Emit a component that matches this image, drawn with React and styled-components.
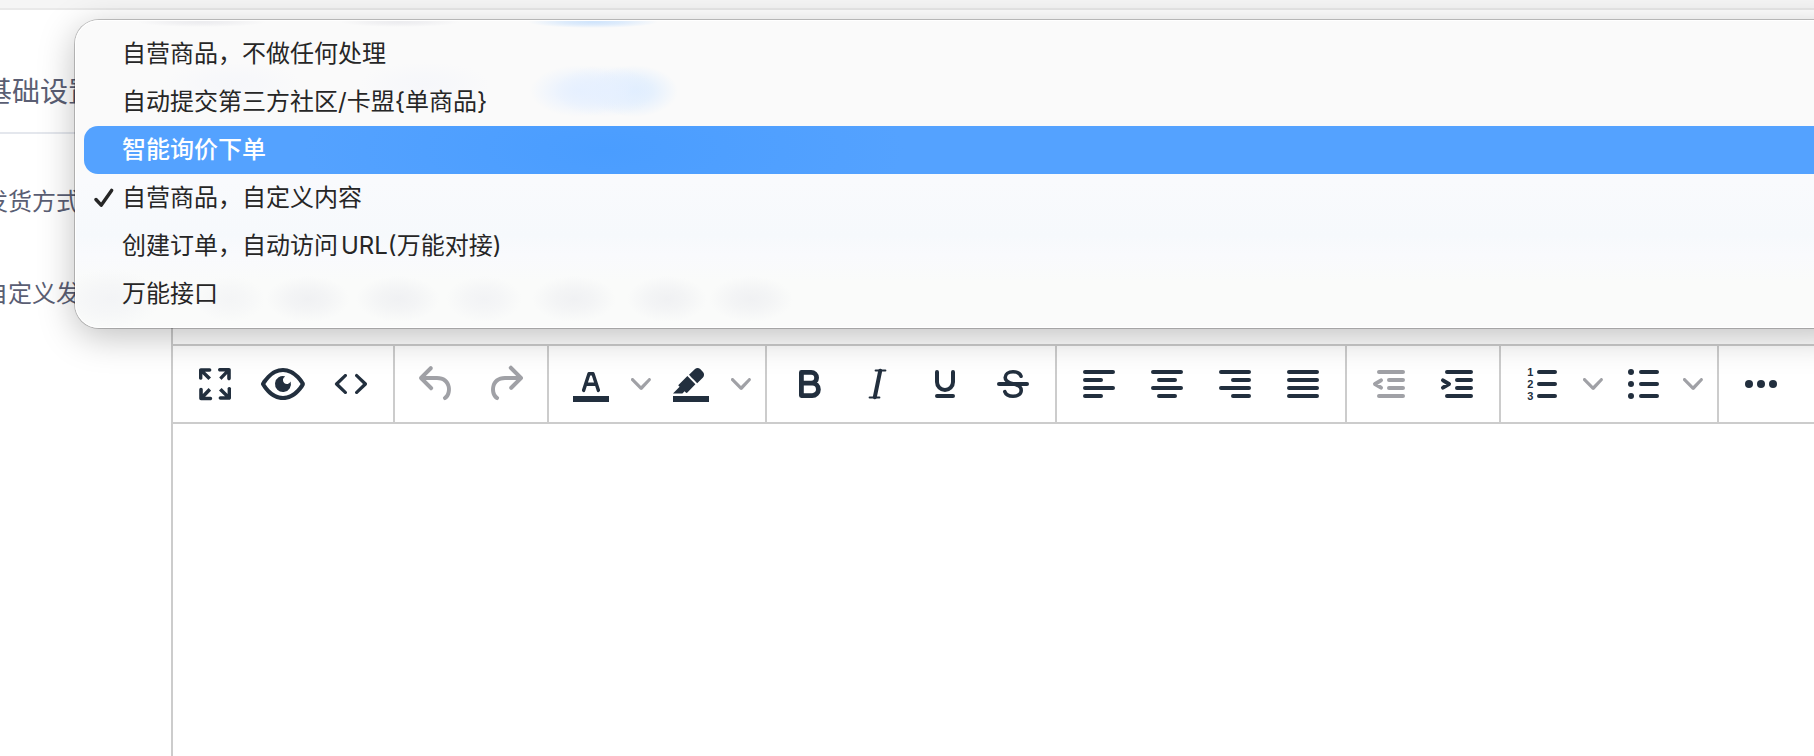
import React, { useState } from 'react';
import styled, { createGlobalStyle, css } from 'styled-components';

const GlobalStyle = createGlobalStyle`
  * {
    box-sizing: border-box;
  }
  body {
    margin: 0;
    background: #fff;
    font-family: Inter, 'Noto Sans CJK SC', sans-serif;
  }
`;

const Page = styled.div`
  position: relative;
  display: flex;
  flex-direction: column;
  min-height: 100vh;
  overflow: hidden;
`;

const TopStrip = styled.div`
  height: 10px;
  background: #f5f5f5;
  border-bottom: 2px solid #e9e9e9;
`;

const TabBar = styled.nav`
  display: flex;
  margin-left: -16px;
  padding: 64px 0 22px;
  border-bottom: 2px solid #e4e7ed;
`;

const Tab = styled.a`
  color: #5a5e73;
  font-size: 28px;
  line-height: 36px;
  text-decoration: none;
`;

const Form = styled.form`
  flex: 1;
  display: flex;
  flex-direction: column;
  gap: 38px;
  margin: 44px -20px 0 -16px;
`;

const FormRow = styled.div`
  display: flex;
  flex: ${(props) => (props.$grow ? 1 : 'none')};
`;

const Label = styled.label`
  flex: none;
  width: 187px;
  color: #5a5e73;
  font-size: 24px;
  line-height: ${(props) => (props.$tall ? 60 : 48)}px;
`;

const Editor = styled.div`
  flex: 1;
  display: flex;
  flex-direction: column;
  border: solid #ccc;
  border-width: 2px 0 0 2px;
`;

const MenuBar = styled.div`
  height: 78px;
`;

const Toolbar = styled.div`
  display: flex;
  height: 80px;
  border: solid #ccc;
  border-width: 2px 0;
`;

const ToolGroup = styled.div`
  display: flex;
  align-items: center;
  padding: 0 8px;
  border-right: 2px solid #ccc;

  &:last-child {
    border-right: 0;
  }
`;

const ToolButton = styled.button`
  display: flex;
  align-items: center;
  justify-content: center;
  width: ${(props) => (props.$narrow ? 32 : 68)}px;
  height: 68px;
  padding: 0;
  border: 0;
  background: none;
  color: ${(props) => (props.$muted ? '#a0a1a6' : '#222f3e')};
`;

const TextArea = styled.textarea`
  flex: 1;
  padding: 24px;
  border: 0;
  outline: 0;
  resize: none;
  background: transparent;
  font: inherit;
  font-size: 24px;
`;

// what shines through the translucent popup: [x, y, width, height, colour]
const glows = [
  [127, 2, 130, 10, '#ececef'],
  [325, 2, 120, 10, '#ececef'],
  [518, 2, 130, 12, '#cfe4fc'],
  [157, 64, 140, 44, '#f6f7fa'],
  [350, 64, 130, 44, '#f6f7fa'],
  [505, 71, 100, 52, '#e6f0ff'],
  [530, 71, 100, 52, '#e6f0ff'],
  [558, 71, 90, 52, '#dcecff'],
  [35, 279, 100, 60, '#f3f4f6'],
  [155, 279, 70, 46, '#f4f5f6'],
  [233, 279, 84, 46, '#f0f1f3'],
  [323, 279, 84, 46, '#f0f1f3'],
  [409, 279, 76, 46, '#f2f3f5'],
  [499, 279, 84, 46, '#f0f1f3'],
  [592, 279, 80, 46, '#f0f1f3'],
  [676, 279, 84, 46, '#f0f1f3'],
];

const glowLayers = glows
  .map(
    ([x, y, w, h, color]) =>
      `radial-gradient(${w / 2}px ${h / 2}px at ${x}px ${y}px, ${color}, ${color}aa 45%, ${color}00)`
  )
  .join(', ');

const Popup = styled.ul`
  position: absolute;
  top: 20px;
  left: 75px;
  right: -40px;
  margin: 0;
  padding: 10px 9px;
  list-style: none;
  border-radius: 24px;
  background: ${glowLayers},
    linear-gradient(#fafafa 0, #fafafa 48%, #f9fafd 52%, #f6f9fc 70%, #f9fafd 76%, #fafbfa 85%);
  box-shadow:
    inset 0 0 0 1px #fff,
    0 0 0 1px rgba(0, 0, 0, 0.22),
    0 8px 36px rgba(0, 0, 0, 0.26);
`;

const Option = styled.button`
  display: flex;
  align-items: center;
  width: 100%;
  height: 48px;
  padding: 0;
  border: 0;
  border-radius: 14px;
  background: none;
  color: #262626;
  font-family: inherit;
  font-size: 24px;
  line-height: 48px;
  text-align: left;
  text-autospace: normal;

  ${(props) =>
    props.$active &&
    css`
      background: radial-gradient(300px 100px at 520px 24px, #4a9dff, #54a2ff);
      color: #fff;
      font-weight: 500;
    `}
`;

const CheckSlot = styled.span`
  display: flex;
  flex: none;
  width: 38px;
  padding-left: 10px;
`;

const Icon = ({ children }) => (
  <svg width="48" height="48" viewBox="0 0 24 24" fill="currentColor" aria-hidden="true">
    {children}
  </svg>
);

const Strokes = ({ d, width = 2 }) => (
  <path
    d={d}
    fill="none"
    stroke="currentColor"
    strokeWidth={width}
    strokeLinecap="round"
    strokeLinejoin="round"
  />
);

const icons = {
  fullscreen: (
    <path d="m15.3 10-1.2-1.3 2.9-3h-2.3a.9.9 0 1 1 0-1.7H19c.5 0 .9.4.9.9v4.4a.9.9 0 1 1-1.8 0V7l-2.9 3Zm0 4 3 3v-2.3a.9.9 0 1 1 1.7 0V19c0 .5-.4.9-.9.9h-4.4a.9.9 0 1 1 0-1.8H17l-3-2.9 1.3-1.2ZM10 15.4l-2.9 3h2.3a.9.9 0 1 1 0 1.7H5a.9.9 0 0 1-.9-.9v-4.4a.9.9 0 1 1 1.8 0V17l2.9-3 1.2 1.3ZM8.7 10 5.7 7v2.3a.9.9 0 0 1-1.7 0V5c0-.5.4-.9.9-.9h4.4a.9.9 0 0 1 0 1.8H7l3 2.9-1.3 1.2Z" />
  ),
  preview: (
    <path
      fillRule="evenodd"
      d="M3.5 12.5c.5.8 1.1 1.6 1.8 2.3 2 2 4.2 3.2 6.7 3.2s4.7-1.2 6.7-3.2a16.2 16.2 0 0 0 2.1-2.8 15.7 15.7 0 0 0-2.1-2.8c-2-2-4.2-3.2-6.7-3.2a9.3 9.3 0 0 0-6.7 3.2A16.2 16.2 0 0 0 3.2 12c0 .2.2.3.3.5Zm-2.4-1 .7-1.2L4 7.8C6.2 5.4 8.9 4 12 4c3 0 5.8 1.4 8.1 3.8a18.2 18.2 0 0 1 2.8 3.7v1l-.7 1.2a18.2 18.2 0 0 1-2.1 2.5c-2.3 2.4-5 3.8-8.1 3.8-3 0-5.8-1.4-8.1-3.8a18.2 18.2 0 0 1-2.8-3.7 1 1 0 0 1 0-1Zm12-3.3a2 2 0 1 0 2.7 2.6 4 4 0 1 1-2.6-2.6Z"
    />
  ),
  code: (
    <path d="M9.8 15.7c.3.3.3.8 0 1-.3.4-.9.4-1.2 0l-4.4-4.1a.8.8 0 0 1 0-1.2l4.4-4.2c.3-.3.9-.3 1.2 0 .3.3.3.8 0 1.1L6 12l3.8 3.7ZM14.2 15.7c-.3.3-.3.8 0 1 .4.4.9.4 1.2 0l4.4-4.1c.3-.3.3-.9 0-1.2l-4.4-4.2a.8.8 0 0 0-1.2 0c-.3.3-.3.8 0 1.1L18 12l-3.8 3.7Z" />
  ),
  undo: (
    <path d="M6.4 8H12c3.7 0 6.2 2 6.8 5.1.6 2.7-.4 5.6-2.3 6.8a1 1 0 0 1-1-1.8c1.1-.6 1.8-2.7 1.4-4.6-.5-2.1-2.1-3.5-4.9-3.5H6.4l3.3 3.3a1 1 0 1 1-1.4 1.4l-5-5a1 1 0 0 1 0-1.4l5-5a1 1 0 0 1 1.4 1.4L6.4 8Z" />
  ),
  redo: (
    <path d="M17.6 10H12c-2.8 0-4.4 1.4-4.9 3.5-.4 2 .3 4 1.4 4.6a1 1 0 1 1-1 1.8c-2-1.2-2.9-4.1-2.3-6.8.6-3 3-5.1 6.8-5.1h5.6l-3.3-3.3a1 1 0 1 1 1.4-1.4l5 5a1 1 0 0 1 0 1.4l-5 5a1 1 0 0 1-1.4-1.4l3.3-3.3Z" />
  ),
  textColor: (
    <>
      <path d="M3 18h18v3H3z" />
      <Strokes d="M8.3 15.2 11 6.9h2l2.7 8.3M9.4 12.1h5.2" width={1.7} />
    </>
  ),
  highlight: (
    <>
      <path d="M3 18h18v3H3z" />
      <path d="M7.7 16.7H3l3.3-3.3-.7-.8L10.2 8l4 4.1-4 4.2c-.2.2-.6.2-.8 0l-.6-.7-1.1 1.1zm5-7.5L11 7.4l3-2.9a2 2 0 0 1 2.6 0L18 6c.7.7.7 2 0 2.7l-2.9 2.9-1.8-1.8-.5-.6" />
    </>
  ),
  bold: (
    <Strokes
      d="M8.2 6.2h4.9a2.7 2.7 0 0 1 0 5.4H8.2zM8.2 11.6h5.4a3.1 3.1 0 0 1 0 6.2H8.2z"
      width={2.4}
    />
  ),
  italic: (
    <>
      <Strokes d="M13.6 5.4l-2.7 13.2" width={2} />
      <Strokes d="M11.3 5.2h4.9M8.3 18.8h4.9" width={1} />
    </>
  ),
  underline: <Strokes d="M8 6v5a4 4 0 0 0 8 0V6M8 18h8" />,
  strike: (
    <>
      <Strokes d="M5 12h14" />
      <Strokes
        d="M16 8.1c-.5-1.4-1.9-2.2-4-2.2-2.3 0-3.9 1.1-3.9 2.9 0 1.6 1.2 2.5 3.9 3.1 2.8.6 4.1 1.6 4.1 3.2 0 1.9-1.6 3-4.1 3-2.1 0-3.6-.8-4.1-2.3"
        width={1.8}
      />
    </>
  ),
  alignLeft: <Strokes d="M5 6h14M5 10h8M5 14h14M5 18h8" />,
  alignCenter: <Strokes d="M5 6h14M8 10h8M5 14h14M8 18h8" />,
  alignRight: <Strokes d="M5 6h14M11 10h8M5 14h14M11 18h8" />,
  alignJustify: <Strokes d="M5 6h14M5 10h14M5 14h14M5 18h14" />,
  outdent: <Strokes d="M7 6h12M12 10h7M12 14h7M7 18h12M8 10.2 5 12l3 1.8" />,
  indent: <Strokes d="M7 6h12M12 10h7M12 14h7M7 18h12M5 10.2 8 12l-3 1.8" />,
  numbered: (
    <>
      <Strokes d="M10 6h8M10 12h8M10 18h8" />
      <text fontSize="5.5" fontWeight="800" textAnchor="middle">
        <tspan x="5.6" y="8">1</tspan>
        <tspan x="5.6" y="14">2</tspan>
        <tspan x="5.6" y="20">3</tspan>
      </text>
    </>
  ),
  bullets: (
    <>
      <Strokes d="M11 6h8M11 12h8M11 18h8" />
      <circle cx="6" cy="6" r="1.5" />
      <circle cx="6" cy="12" r="1.5" />
      <circle cx="6" cy="18" r="1.5" />
    </>
  ),
  more: (
    <>
      <circle cx="6" cy="12" r="2" />
      <circle cx="12" cy="12" r="2" />
      <circle cx="18" cy="12" r="2" />
    </>
  ),
};

const toolGroups = [
  [
    { icon: 'fullscreen', label: '全屏' },
    { icon: 'preview', label: '预览' },
    { icon: 'code', label: '源代码' },
  ],
  [
    { icon: 'undo', label: '撤销', disabled: true },
    { icon: 'redo', label: '重做', disabled: true },
  ],
  [
    { icon: 'textColor', label: '文字颜色', split: true },
    { icon: 'highlight', label: '背景颜色', split: true },
  ],
  [
    { icon: 'bold', label: '粗体' },
    { icon: 'italic', label: '斜体' },
    { icon: 'underline', label: '下划线' },
    { icon: 'strike', label: '删除线' },
  ],
  [
    { icon: 'alignLeft', label: '左对齐' },
    { icon: 'alignCenter', label: '居中' },
    { icon: 'alignRight', label: '右对齐' },
    { icon: 'alignJustify', label: '两端对齐' },
  ],
  [
    { icon: 'outdent', label: '减少缩进', disabled: true },
    { icon: 'indent', label: '增加缩进' },
  ],
  [
    { icon: 'numbered', label: '编号列表', split: true },
    { icon: 'bullets', label: '项目符号', split: true },
  ],
  [{ icon: 'more', label: '更多' }],
];

const options = [
  '自营商品，不做任何处理',
  '自动提交第三方社区/卡盟{单商品}',
  '智能询价下单',
  '自营商品，自定义内容',
  '创建订单，自动访问URL(万能对接)',
  '万能接口',
];

function Tool({ tool }) {
  return (
    <>
      <ToolButton
        type="button"
        aria-label={tool.label}
        disabled={tool.disabled}
        $muted={tool.disabled}
      >
        <Icon>{icons[tool.icon]}</Icon>
      </ToolButton>
      {tool.split && (
        <ToolButton type="button" aria-label={`${tool.label}选项`} $narrow $muted>
          <svg width="20" height="20" viewBox="0 0 10 10" fill="currentColor" aria-hidden="true">
            <path d="M8.7 2.2c.3-.3.8-.3 1 0 .4.4.4.9 0 1.2L5.7 7.8c-.3.3-.9.3-1.2 0L.2 3.4a.8.8 0 0 1 0-1.2c.3-.3.8-.3 1.1 0L5 6l3.7-3.8Z" />
          </svg>
        </ToolButton>
      )}
    </>
  );
}

export default function App() {
  const [selected, setSelected] = useState(3);
  const [active, setActive] = useState(2);

  return (
    <Page>
      <GlobalStyle />
      <TopStrip />
      <TabBar>
        <Tab href="#base">基础设置</Tab>
      </TabBar>
      <Form>
        <FormRow>
          <Label as="span" id="delivery-label">
            发货方式
          </Label>
        </FormRow>
        <FormRow $grow>
          <Label htmlFor="content" $tall>
            自定义发
          </Label>
          <Editor>
            <MenuBar />
            <Toolbar role="toolbar">
              {toolGroups.map((group) => (
                <ToolGroup key={group[0].icon}>
                  {group.map((tool) => (
                    <Tool key={tool.icon} tool={tool} />
                  ))}
                </ToolGroup>
              ))}
            </Toolbar>
            <TextArea id="content" />
          </Editor>
        </FormRow>
      </Form>
      <Popup role="listbox" aria-labelledby="delivery-label">
        {options.map((text, i) => (
          <li key={text} role="presentation">
            <Option
              type="button"
              role="option"
              aria-selected={i === selected}
              $active={i === active}
              onMouseEnter={() => setActive(i)}
              onClick={() => setSelected(i)}
            >
              <CheckSlot>
                {i === selected && (
                  <svg width="20" height="20" viewBox="0 0 20 20" aria-hidden="true">
                    <path
                      d="M2 11.5 7.2 17.2 17.6 2.4"
                      fill="none"
                      stroke="currentColor"
                      strokeWidth="3.4"
                      strokeLinecap="round"
                      strokeLinejoin="round"
                    />
                  </svg>
                )}
              </CheckSlot>
              {text}
            </Option>
          </li>
        ))}
      </Popup>
    </Page>
  );
}
